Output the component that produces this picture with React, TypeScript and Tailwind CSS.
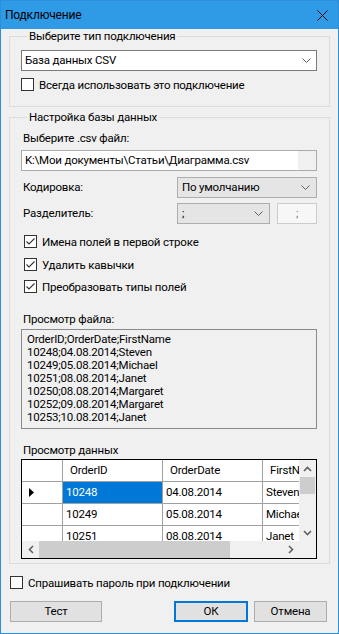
import React from "react";

const previewLines = [
  "OrderID;OrderDate;FirstName",
  "10248;04.08.2014;Steven",
  "10249;05.08.2014;Michael",
  "10251;08.08.2014;Janet",
  "10250;08.08.2014;Margaret",
  "10252;09.08.2014;Margaret",
  "10253;10.08.2014;Janet",
];

const rows = [
  { id: "10248", date: "04.08.2014", name: "Steven", current: true },
  { id: "10249", date: "05.08.2014", name: "Michael", current: false },
  { id: "10251", date: "08.08.2014", name: "Janet", current: false },
];

function Chevron({ className = "" }: { className?: string }) {
  return (
    <svg width="9" height="5" viewBox="0 0 9 5" className={className}>
      <path d="M0.5 0.5 L4.5 4.5 L8.5 0.5" fill="none" stroke="#606060" strokeWidth="1" />
    </svg>
  );
}

function CheckBox({ checked, label, className = "" }: { checked?: boolean; label: string; className?: string }) {
  return (
    <div className={`flex items-center h-[13px] ${className}`}>
      <div className="w-[13px] h-[13px] border border-[#333333] bg-white flex items-center justify-center shrink-0">
        {checked && (
          <svg width="11" height="11" viewBox="0 0 11 11">
            <path d="M1.5 5.5 L4 8 L9.5 2.5" fill="none" stroke="#333333" strokeWidth="1.1" />
          </svg>
        )}
      </div>
      <span className="ml-[5px] leading-[14px] whitespace-nowrap">{label}</span>
    </div>
  );
}

function ScrollArrow({ dir }: { dir: "up" | "down" | "left" | "right" }) {
  const d = {
    up: "M1 5 L4.5 1.5 L8 5",
    down: "M1 1 L4.5 4.5 L8 1",
    left: "M5 1 L1.5 4.5 L5 8",
    right: "M1 1 L4.5 4.5 L1 8",
  }[dir];
  const vertical = dir === "up" || dir === "down";
  return (
    <svg width={vertical ? 9 : 6} height={vertical ? 6 : 9} viewBox={vertical ? "0 0 9 6" : "0 0 6 9"}>
      <path d={d} fill="none" stroke="#606060" strokeWidth="1.6" />
    </svg>
  );
}

export default function App() {
  return (
    <div className="w-[339px] h-[634px] border border-[#2b8fdc] bg-[#f0f0f0] text-[11.5px] tracking-[-0.2px] text-black font-['Roboto','Liberation_Sans',sans-serif] flex flex-col overflow-hidden">
      {/* Title bar */}
      <div className="h-[28px] bg-[#2f9ae6] flex items-center justify-between pl-[4px] pr-[10px] shrink-0">
        <span className="text-[12px] leading-[14px]">Подключение</span>
        <svg width="11" height="11" viewBox="0 0 11 11">
          <path d="M0.5 0.5 L10.5 10.5 M10.5 0.5 L0.5 10.5" stroke="#000" strokeWidth="1" />
        </svg>
      </div>

      {/* Group 1 */}
      <fieldset className="mx-[8px] w-[321px] border border-[#dcdcdc] pl-[11px] pb-[15px]">
        <legend className="ml-[6px] px-[2px] leading-[14px]">Выберите тип подключения</legend>
        <div className="mt-[7px] w-[296px] h-[21px] border border-[#7a7a7a] bg-white flex items-center justify-between pl-[3px] pr-[5px]">
          <span>База данных CSV</span>
          <Chevron />
        </div>
        <CheckBox className="mt-[7px]" label="Всегда использовать это подключение" />
      </fieldset>

      {/* Group 2 */}
      <fieldset className="mt-[3px] mx-[8px] w-[321px] border border-[#dcdcdc] pl-[11px] pb-[4px]">
        <legend className="ml-[6px] px-[2px] leading-[14px]">Настройка базы данных</legend>
        <div className="mt-[7px] ml-[2px] leading-[14px]">Выберите .csv файл:</div>
        <div className="mt-[5px] w-[296px] h-[21px] border border-[#ababab] bg-[#f0f0f0] flex">
          <div className="w-[276px] bg-white flex items-center pl-[3px] whitespace-nowrap overflow-hidden">
            K:\Мои документы\Статьи\Диаграмма.csv
          </div>
        </div>
        <div className="mt-[6px] flex items-center h-[21px]">
          <span className="ml-[2px] w-[154px]">Кодировка:</span>
          <div className="w-[140px] h-[21px] border border-[#adadad] bg-[#e5e5e5] flex items-center justify-between pl-[4px] pr-[6px]">
            <span>По умолчанию</span>
            <Chevron />
          </div>
        </div>
        <div className="mt-[5px] flex items-center h-[21px]">
          <span className="ml-[2px] w-[154px]">Разделитель:</span>
          <div className="w-[93px] h-[21px] border border-[#adadad] bg-[#e5e5e5] flex items-center justify-between pl-[4px] pr-[6px]">
            <span>;</span>
            <Chevron />
          </div>
          <div className="ml-[7px] w-[40px] h-[21px] border border-[#cccccc] bg-[#f7f7f7] flex items-center justify-center text-[#777777]">
            ;
          </div>
        </div>

        <CheckBox className="mt-[11px] ml-[3px]" checked label="Имена полей в первой строке" />
        <CheckBox className="mt-[10px] ml-[3px]" checked label="Удалить кавычки" />
        <CheckBox className="mt-[9px] ml-[3px]" checked label="Преобразовать типы полей" />

        <div className="mt-[19px] ml-[2px] leading-[14px]">Просмотр файла:</div>
        <div className="mt-[3px] w-[296px] h-[100px] border border-[#8a8a8a] bg-[#f0f0f0] pl-[5px] pt-[3px]">
          {previewLines.map((l) => (
            <div key={l} className="leading-[13px]">{l}</div>
          ))}
        </div>

        <div className="mt-[14px] ml-[2px] leading-[14px]">Просмотр данных</div>
        <div className="mt-[2px] w-[296px] h-[100px] border border-black bg-white grid grid-cols-[1fr_17px] grid-rows-[1fr_17px]">
          <div className="overflow-hidden">
            <div className="flex w-max h-[22px]">
              <div className="w-[41px] border-r border-b border-[#a0a0a0]" />
              {["OrderID", "OrderDate", "FirstName"].map((h) => (
                <div key={h} className="w-[100px] border-r border-b border-[#a0a0a0] flex items-center pl-[7px]">
                  {h}
                </div>
              ))}
            </div>
            {rows.map((r) => (
              <div key={r.id} className="flex w-max h-[22px]">
                <div className="w-[41px] border-r border-b border-[#a0a0a0] flex items-center pl-[7px]">
                  {r.current && (
                    <svg width="5" height="9" viewBox="0 0 5 9">
                      <path d="M0 0 L5 4.5 L0 9 Z" fill="#000" />
                    </svg>
                  )}
                </div>
                <div className={`w-[100px] border-r border-b border-[#a0a0a0] flex items-center pl-[3px] ${r.current ? "bg-[#0078d7] text-white" : ""}`}>
                  {r.id}
                </div>
                <div className="w-[100px] border-r border-b border-[#a0a0a0] flex items-center pl-[3px]">{r.date}</div>
                <div className="w-[100px] border-r border-b border-[#a0a0a0] flex items-center pl-[3px]">{r.name}</div>
              </div>
            ))}
          </div>
          {/* vertical scrollbar */}
          <div className="bg-[#f0f0f0] flex flex-col items-center">
            <div className="h-[17px] flex items-center justify-center">
              <ScrollArrow dir="up" />
            </div>
            <div className="w-[15px] h-[17px] bg-[#cdcdcd]" />
            <div className="flex-1" />
            <div className="h-[17px] flex items-center justify-center">
              <ScrollArrow dir="down" />
            </div>
          </div>
          {/* horizontal scrollbar */}
          <div className="bg-[#f0f0f0] flex items-center">
            <div className="w-[17px] flex items-center justify-center">
              <ScrollArrow dir="left" />
            </div>
            <div className="w-[191px] h-[17px] bg-[#cdcdcd]" />
            <div className="flex-1" />
            <div className="w-[17px] flex items-center justify-center">
              <ScrollArrow dir="right" />
            </div>
          </div>
          <div className="bg-[#f0f0f0]" />
        </div>
      </fieldset>

      <CheckBox className="mt-[12px] ml-[9px]" label="Спрашивать пароль при подключении" />

      <div className="mt-[12px] flex items-center h-[21px] px-[9px]">
        <button className="w-[92px] h-[21px] border border-[#adadad] bg-[#e1e1e1]">Тест</button>
        <button className="ml-[72px] w-[74px] h-[21px] border-2 border-[#0078d7] bg-[#e1e1e1]">ОК</button>
        <button className="ml-[6px] w-[73px] h-[21px] border border-[#adadad] bg-[#e1e1e1]">Отмена</button>
      </div>
    </div>
  );
}
